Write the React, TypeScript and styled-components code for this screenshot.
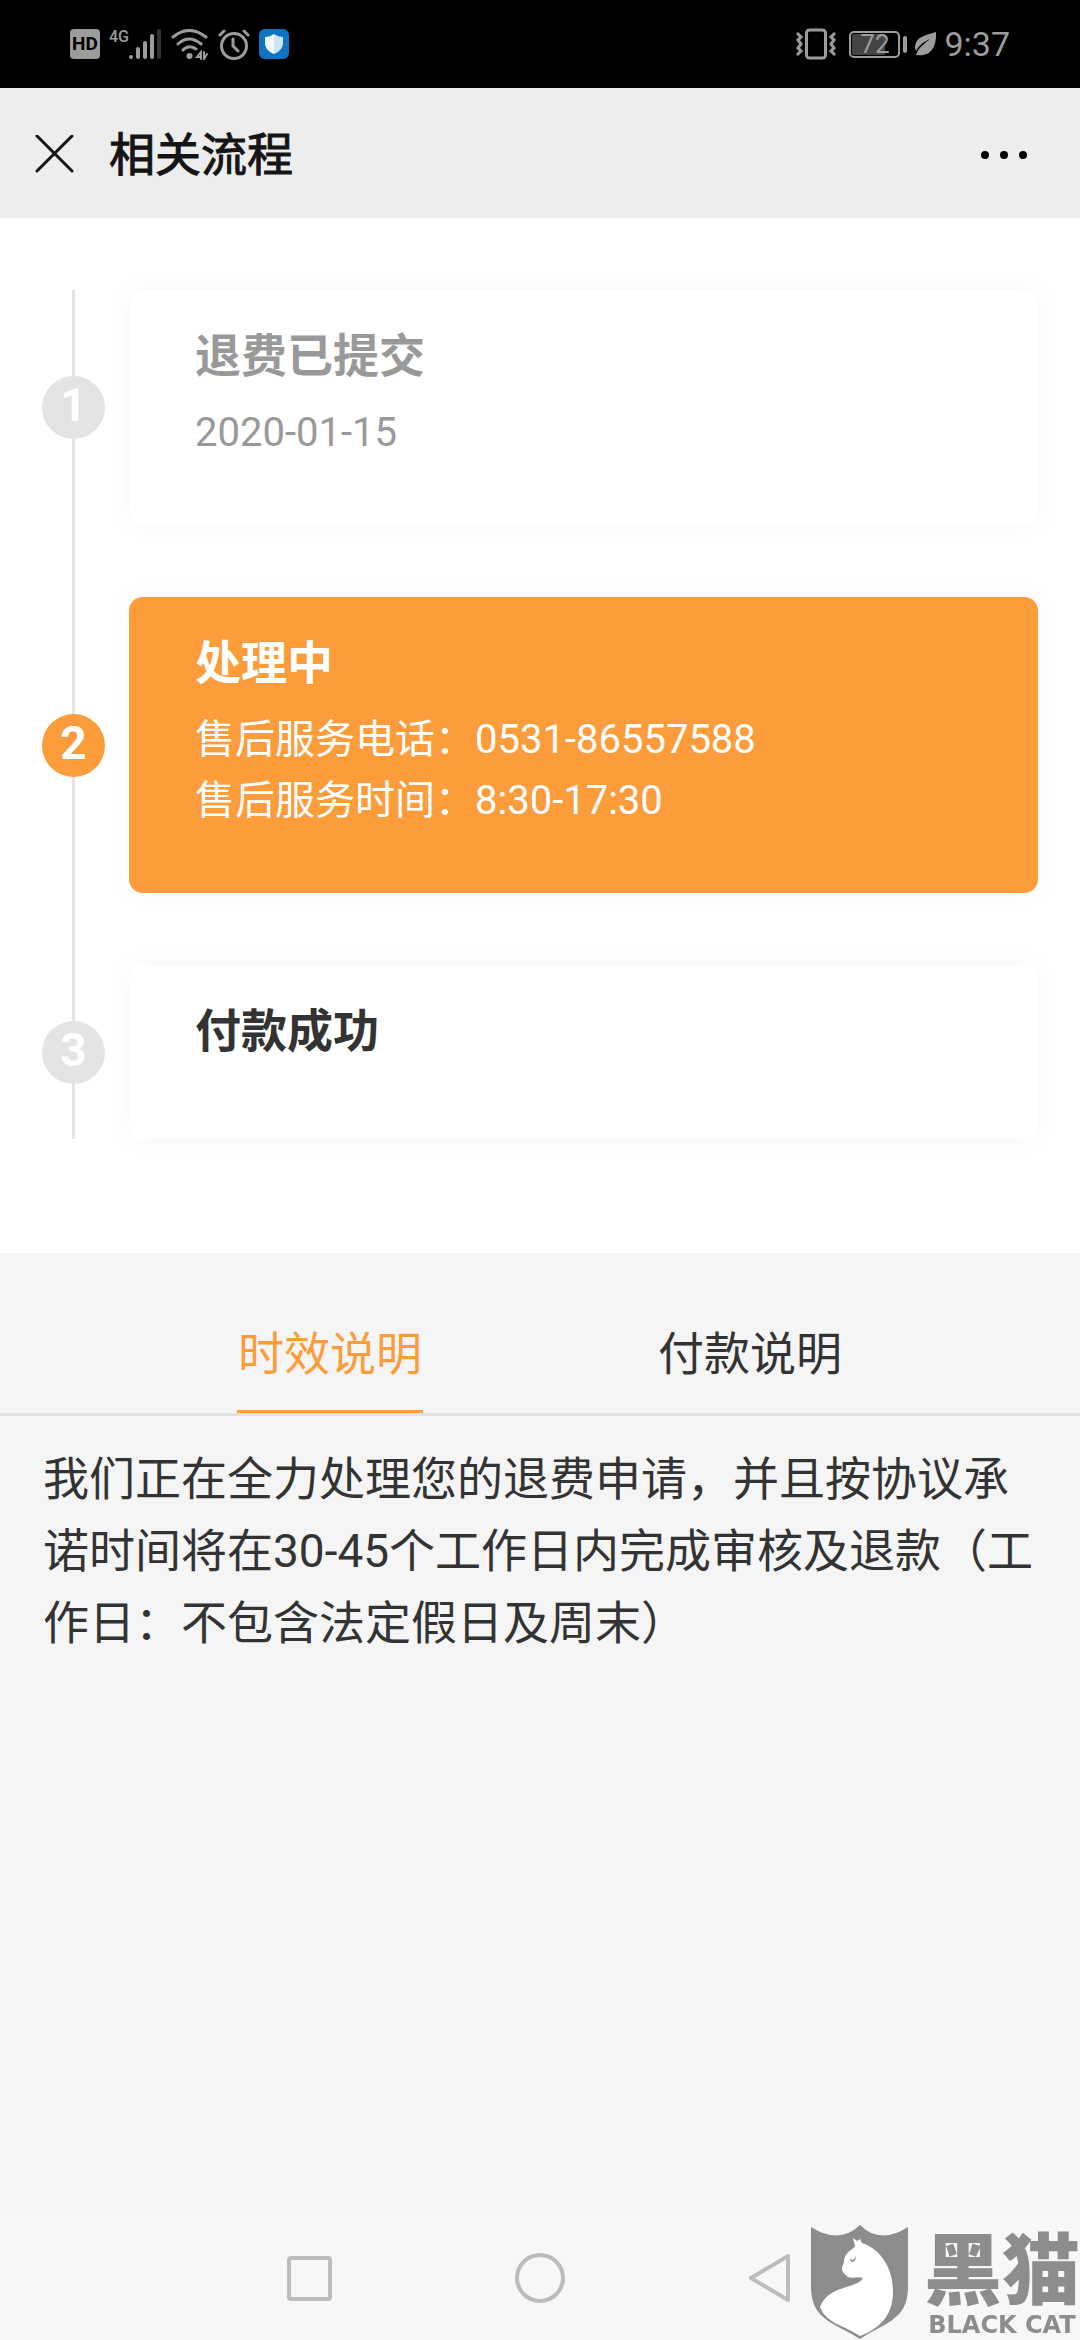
import React, { useState } from "react";
import styled, { createGlobalStyle } from "styled-components";

const ORANGE = "#fd9c3a";
const STATUS_GREY = "#9c9c9c";

const GlobalStyle = createGlobalStyle`
  * { box-sizing: border-box; }
  body {
    margin: 0;
    background: #f5f5f5;
    color: #333;
    font-family: Roboto, "Noto Sans CJK SC", sans-serif;
  }
  h1, h2, p, ol { margin: 0; padding: 0; }
  button { margin: 0; padding: 0; border: 0; background: none; font: inherit; color: inherit; }
`;

const Screen = styled.div`
  display: flex;
  flex-direction: column;
  min-height: 100vh;
`;

const StatusBar = styled.div`
  display: flex;
  align-items: center;
  justify-content: space-between;
  height: 88px;
  padding: 0 70px;
  background: #000;
  color: ${STATUS_GREY};
`;

const StatusGroup = styled.div<{ $gap: number }>`
  display: flex;
  align-items: center;
  gap: ${(p) => p.$gap}px;
`;

const HdBadge = styled.span`
  width: 30px;
  border-radius: 4px;
  background: ${STATUS_GREY};
  color: #000;
  font-size: 19px;
  font-weight: 700;
  line-height: 30px;
  text-align: center;
`;

const Signal = styled.span`
  display: flex;
  align-items: flex-start;
  font-size: 16px;
  font-weight: 500;
  line-height: 16px;
`;

const Battery = styled.span`
  display: flex;
  align-items: center;
  gap: 3px;
  margin-left: 6px;
`;

const BatteryBody = styled.span`
  width: 51px;
  border: 2px solid ${STATUS_GREY};
  border-radius: 5px;
  background: linear-gradient(to right, #444 72%, #000 72%);
  background-clip: content-box;
  padding: 1px;
  font-size: 26px;
  line-height: 21px;
  text-align: center;
`;

const BatteryTip = styled.span`
  width: 4px;
  height: 17px;
  border-radius: 2px;
  background: ${STATUS_GREY};
`;

const Clock = styled.span`
  font-size: 34px;
  line-height: 40px;
`;

const Header = styled.header`
  display: flex;
  align-items: center;
  gap: 34px;
  height: 130px;
  padding: 4px 50px 0 35px;
  background: #ededed;
  color: #151515;
`;

const IconButton = styled.button`
  display: flex;
`;

const PageTitle = styled.h1`
  flex: 1;
  font-size: 46px;
  font-weight: 400;
  line-height: 64px;
  -webkit-text-stroke: 1px currentColor;
`;

const Progress = styled.section`
  padding: 72px 42px 114px;
  background: #fff;
`;

const Steps = styled.ol`
  display: flex;
  flex-direction: column;
  gap: 72px;
  list-style: none;
  background: linear-gradient(#e4e4e4, #e4e4e4) 30px 0 / 3px 100% no-repeat;
`;

const Step = styled.li`
  display: flex;
  align-items: center;
  gap: 24px;
`;

const StepNumber = styled.span<{ $active: boolean }>`
  flex: none;
  width: 63px;
  height: 63px;
  border-radius: 50%;
  background: ${(p) => (p.$active ? ORANGE : "#e4e4e4")};
  color: #fff;
  font-size: 46px;
  font-weight: 700;
  line-height: 58px;
  text-align: center;
`;

const StepCard = styled.div<{ $active: boolean; $muted: boolean }>`
  flex: 1;
  padding: 30px 66px 62px;
  border-radius: 14px;
  background: ${(p) => (p.$active ? ORANGE : "#fff")};
  color: ${(p) => (p.$active ? "#fff" : p.$muted ? "#999" : "#333")};
  box-shadow: 0 0 24px rgba(0, 0, 0, 0.04);
`;

const StepTitle = styled.h2`
  margin-bottom: 10px;
  font-size: 46px;
  font-weight: 700;
  line-height: 72px;
`;

const StepLine = styled.p`
  font-size: 40px;
  line-height: 61px;
`;

const TabList = styled.div`
  display: flex;
  padding: 61px 120px 0;
  border-bottom: 3px solid #e2e2e2;
`;

const TabCell = styled.div`
  flex: 1;
  display: flex;
  justify-content: center;
`;

const Tab = styled.button<{ $active: boolean }>`
  padding: 4px 1px 20px;
  border-bottom: 3px solid ${(p) => (p.$active ? ORANGE : "transparent")};
  color: ${(p) => (p.$active ? ORANGE : "#333")};
  font-size: 46px;
  line-height: 72px;
`;

const Notice = styled.p`
  flex: 1;
  padding: 27px 43px;
  font-size: 46px;
  line-height: 72px;
  line-break: anywhere;
`;

const NavBar = styled.nav`
  display: flex;
  align-items: center;
  justify-content: center;
  gap: 181px;
  height: 124px;
  background: #f7f7f7;
`;

const Watermark = styled.div`
  position: fixed;
  right: 0;
  bottom: 0;
  display: flex;
  align-items: flex-start;
  gap: 15px;
  color: #8e8c8d;
`;

const WatermarkText = styled.div`
  display: flex;
  flex-direction: column;
  align-items: center;
  gap: 10px;
  padding-top: 4px;
`;

const BrandName = styled.span`
  font-family: "Noto Sans CJK SC", sans-serif;
  font-size: 78px;
  font-weight: 900;
  line-height: 72px;
`;

const BrandLatin = styled.span`
  font-family: "DejaVu Sans", sans-serif;
  font-size: 24px;
  font-weight: 700;
  line-height: 28px;
  white-space: nowrap;
`;

const SignalBars = () => (
  <svg width="33" height="31" viewBox="0 0 33 31" strokeWidth="4" strokeLinecap="round" stroke={STATUS_GREY}>
    <path d="M2 28v0M9 20v8M16 14v14M23 7v21" />
    <path d="M30 2v26" stroke="#333" />
  </svg>
);

const WifiIcon = () => (
  <svg width="38" height="31" viewBox="0 0 38 31" fill="none" stroke={STATUS_GREY} strokeWidth="3" strokeLinecap="round">
    <path d="M2 8Q18 -5 35 8M7 15Q18 5 30 15M12 21Q18 15 25 20" />
    <circle cx="18.500" cy="27" r="3" fill={STATUS_GREY} stroke="none" />
    <path d="M30 30V23L26 28H30M33 23V30L36 25" strokeWidth="2" />
  </svg>
);

const AlarmIcon = () => (
  <svg width="32" height="31" viewBox="0 0 32 31" fill="none" stroke={STATUS_GREY} strokeWidth="3" strokeLinecap="round">
    <circle cx="16" cy="17" r="12.500" />
    <path d="M15 10V17L20 22M2 6L6 2M26 2L30 6" />
  </svg>
);

const ShieldAppIcon = () => (
  <svg width="30" height="30" viewBox="0 0 30 30">
    <rect width="30" height="30" rx="6" fill="#0f73c4" />
    <path d="M15 5C12 7 9 8 6 8V14C6 19 10 23 15 25Z" fill="#f2fafd" />
    <path d="M15 5C18 7 21 8 24 8V14C24 19 20 23 15 25Z" fill="#cfe4f3" />
  </svg>
);

const VibrateIcon = () => (
  <svg width="40" height="32" viewBox="0 0 40 32" fill="none" stroke={STATUS_GREY} strokeWidth="3">
    <rect x="10.500" y="2" width="19" height="28" rx="3" />
    <path d="M1 5L5 9L2 12L5 16L2 20L5 23L1 27M39 5L35 9L38 12L35 16L38 20L35 23L39 27" />
  </svg>
);

const LeafIcon = () => (
  <svg width="23" height="26" viewBox="0 0 23 26" fill={STATUS_GREY}>
    <path d="M22 1C8 5 1 7 1 17L2 20C6 13 10 11 16 8C10 13 5 16 2 24C14 26 23 19 22 1Z" />
  </svg>
);

const CloseIcon = () => (
  <svg width="40" height="40" viewBox="0 0 40 40" stroke="#151515" strokeWidth="3" strokeLinecap="round">
    <path d="M2 1L37 36M37 1L2 36" />
  </svg>
);

const MoreIcon = () => (
  <svg width="50" height="10" viewBox="0 0 50 10" fill="#000">
    <circle cx="5" cy="5" r="4" />
    <circle cx="24" cy="5" r="4" />
    <circle cx="43" cy="5" r="4" />
  </svg>
);

const CatShield = () => (
  <svg width="98" height="115" viewBox="0 0 98 115">
    <path
      d="M0 2Q28 20 49 0Q69 20 97 2V62C97 96 72 98 49 114C25 98 0 96 0 62Z"
      fill="#8e8c8d"
    />
    <path
      d="M42 13L46 16L49 14L51 18C70 24 82 44 82 66C82 88 72 102 49 111C32 100 15 98 9 82C17 60 46 64 52 53C46 51 42 54 37 52C34 49 30 47 31 42C34 38 32 34 35 30C38 25 43 24 44 21Z"
      fill="#fff"
    />
    <path d="M39 33Q42 38 45 31Q45 36 42 37Q39 37 39 33Z" fill="#8e8c8d" />
  </svg>
);

type StepData = { title: string; lines: string[]; state: "done" | "active" | "pending" };

const steps: StepData[] = [
  { title: "退费已提交", lines: ["2020-01-15"], state: "done" },
  { title: "处理中", lines: ["售后服务电话：0531-86557588", "售后服务时间：8:30-17:30"], state: "active" },
  { title: "付款成功", lines: [], state: "pending" },
];

const tabs = ["时效说明", "付款说明"];

export default function App() {
  const [current, setCurrent] = useState(0);
  return (
    <Screen>
      <GlobalStyle />
      <StatusBar>
        <StatusGroup $gap={9}>
          <HdBadge>HD</HdBadge>
          <Signal>
            4G
            <SignalBars />
          </Signal>
          <WifiIcon />
          <AlarmIcon />
          <ShieldAppIcon />
        </StatusGroup>
        <StatusGroup $gap={7}>
          <VibrateIcon />
          <Battery>
            <BatteryBody>72</BatteryBody>
            <BatteryTip />
          </Battery>
          <LeafIcon />
          <Clock>9:37</Clock>
        </StatusGroup>
      </StatusBar>
      <Header>
        <IconButton aria-label="关闭">
          <CloseIcon />
        </IconButton>
        <PageTitle>相关流程</PageTitle>
        <IconButton aria-label="更多">
          <MoreIcon />
        </IconButton>
      </Header>
      <Progress>
        <Steps>
          {steps.map((step, i) => (
            <Step key={step.title}>
              <StepNumber $active={step.state === "active"}>{i + 1}</StepNumber>
              <StepCard $active={step.state === "active"} $muted={step.state === "done"}>
                <StepTitle>{step.title}</StepTitle>
                {step.lines.map((line) => (
                  <StepLine key={line}>{line}</StepLine>
                ))}
              </StepCard>
            </Step>
          ))}
        </Steps>
      </Progress>
      <TabList role="tablist">
        {tabs.map((label, i) => (
          <TabCell key={label} role="presentation">
            <Tab role="tab" aria-selected={i === current} $active={i === current} onClick={() => setCurrent(i)}>
              {label}
            </Tab>
          </TabCell>
        ))}
      </TabList>
      <Notice>
        我们正在全力处理您的退费申请，并且按协议承诺时间将在30-45个工作日内完成审核及退款（工作日：不包含法定假日及周末）
      </Notice>
      <NavBar>
        <IconButton aria-label="最近任务">
          <svg width="50" height="50" viewBox="0 0 50 50" fill="none" stroke="#bcbcbc" strokeWidth="4">
            <rect x="5" y="5" width="41" height="41" rx="2" />
          </svg>
        </IconButton>
        <IconButton aria-label="主屏幕">
          <svg width="50" height="50" viewBox="0 0 50 50" fill="none" stroke="#bcbcbc" strokeWidth="4">
            <circle cx="25" cy="25" r="23" />
          </svg>
        </IconButton>
        <IconButton aria-label="返回">
          <svg width="50" height="50" viewBox="0 0 50 50" fill="none" stroke="#bcbcbc" strokeWidth="4" strokeLinejoin="round">
            <path d="M5 25L42 3V47Z" />
          </svg>
        </IconButton>
      </NavBar>
      <Watermark>
        <CatShield />
        <WatermarkText>
          <BrandName>黑猫</BrandName>
          <BrandLatin>BLACK CAT</BrandLatin>
        </WatermarkText>
      </Watermark>
    </Screen>
  );
}
